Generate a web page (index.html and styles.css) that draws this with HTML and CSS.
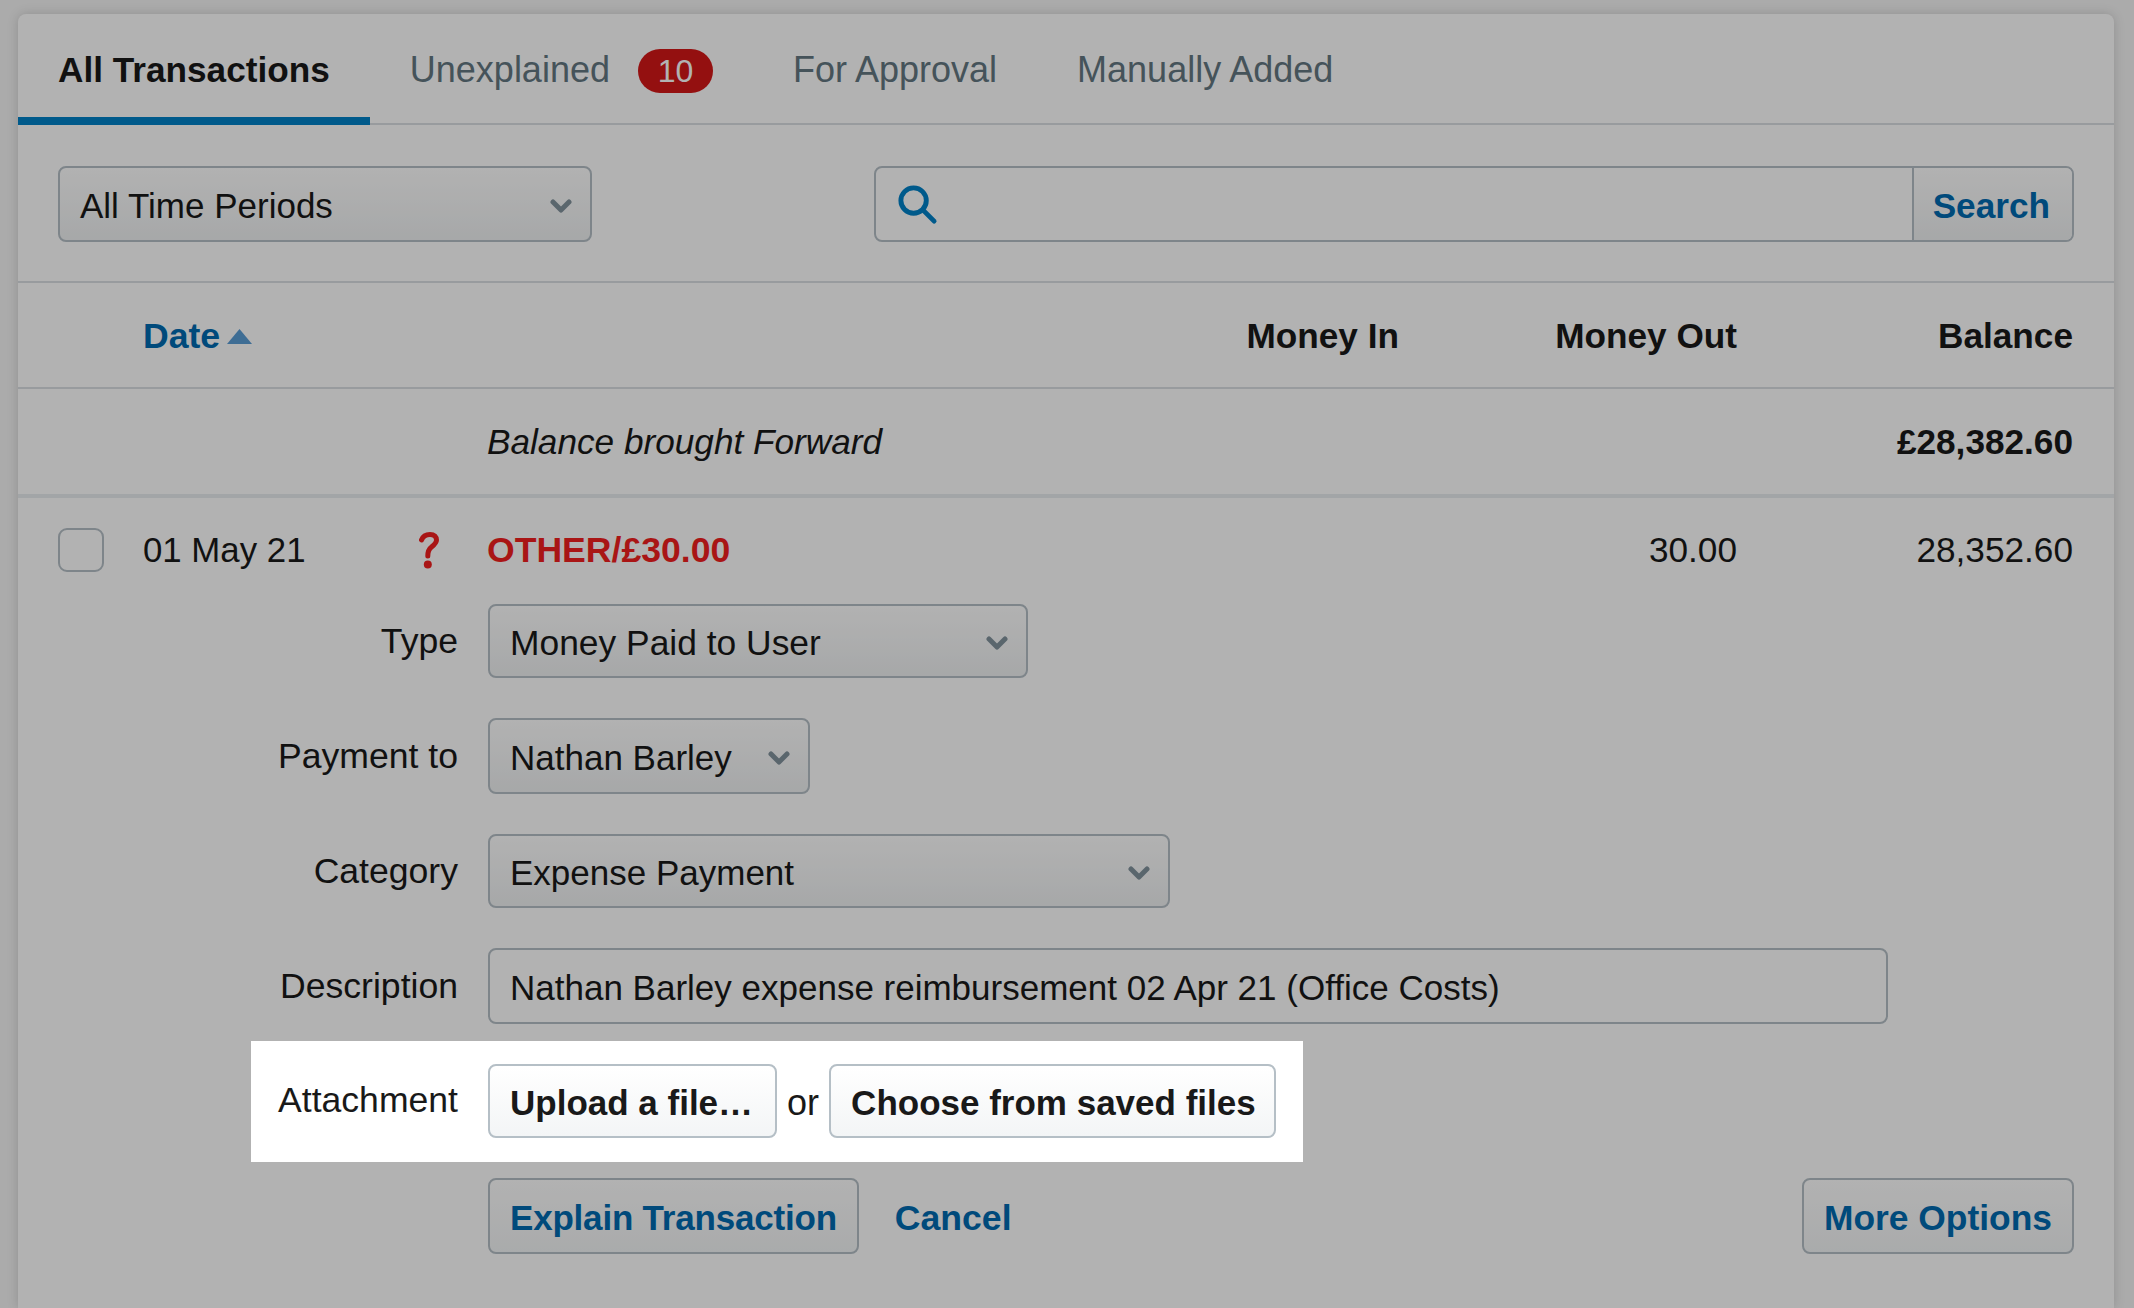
FILE: index.html
```html
<!DOCTYPE html>
<html lang="en">
<head>
<meta charset="utf-8">
<title>Bank transactions</title>
<link rel="stylesheet" href="styles.css">
</head>
<body>
<main class="card">
  <nav class="tabs">
    <a class="tab tab-active">All Transactions</a>
    <a class="tab">Unexplained<span class="badge">10</span></a>
    <a class="tab">For Approval</a>
    <a class="tab">Manually Added</a>
  </nav>

  <section class="filters">
    <div class="control select select-period">
      <span>All Time Periods</span>
      <svg class="chevron" viewBox="0 0 22 14"><path d="M3 3 11 11 19 3"/></svg>
    </div>
    <div class="search">
      <div class="search-field">
        <svg class="search-icon" viewBox="0 0 44 44"><circle cx="18" cy="18" r="13"/><path d="M28 28 39 39"/></svg>
      </div>
      <div class="search-button">Search</div>
    </div>
  </section>

  <section class="row row-head">
    <div class="col-date head-date">Date<svg class="sort" viewBox="0 0 25 15"><path d="M12.500 0 25 15H0z"/></svg></div>
    <div class="col-in">Money In</div>
    <div class="col-out">Money Out</div>
    <div class="col-bal">Balance</div>
  </section>

  <section class="row row-forward">
    <div class="col-desc forward-label">Balance brought Forward</div>
    <div class="col-bal forward-amount">£28,382.60</div>
  </section>

  <section class="transaction">
    <div class="row row-tx">
      <div class="col-check"><span class="checkbox"></span></div>
      <div class="col-date tx-date">01 May 21</div>
      <div class="col-flag">
        <svg class="flag" viewBox="0 0 20 37"><path class="flag-hook" d="M2.500 8C4 4 7 2.500 11 2.500 15.500 2.500 17.500 5 17.500 8 17.500 11 15 13 12.500 15 10.500 16.500 8.800 18 8.800 24"/><circle cx="8.800" cy="32.500" r="4"/></svg>
      </div>
      <div class="col-desc tx-title">OTHER/£30.00</div>
      <div class="col-out">30.00</div>
      <div class="col-bal">28,352.60</div>
    </div>

    <div class="form">
      <div class="form-row form-row-short">
        <div class="label">Type</div>
        <div class="control select select-type">
          <span>Money Paid to User</span>
          <svg class="chevron" viewBox="0 0 22 14"><path d="M3 3 11 11 19 3"/></svg>
        </div>
      </div>
      <div class="form-row">
        <div class="label">Payment to</div>
        <div class="control select select-payment">
          <span>Nathan Barley</span>
          <svg class="chevron" viewBox="0 0 22 14"><path d="M3 3 11 11 19 3"/></svg>
        </div>
      </div>
      <div class="form-row form-row-short">
        <div class="label">Category</div>
        <div class="control select select-category">
          <span>Expense Payment</span>
          <svg class="chevron" viewBox="0 0 22 14"><path d="M3 3 11 11 19 3"/></svg>
        </div>
      </div>
      <div class="form-row">
        <div class="label">Description</div>
        <div class="control text-input">Nathan Barley expense reimbursement 02 Apr 21 (Office Costs)</div>
      </div>
      <div class="form-row form-row-short form-row-attachment">
        <div class="spotlight"></div>
        <div class="label label-attachment">Attachment</div>
        <div class="control button button-dark button-upload">Upload a file…</div>
        <span class="or">or</span>
        <div class="control button button-dark button-saved">Choose from saved files</div>
      </div>
      <div class="form-row">
        <div class="label"></div>
        <div class="control button button-link button-explain">Explain Transaction</div>
        <a class="cancel">Cancel</a>
        <div class="control button button-link button-more">More Options</div>
      </div>
    </div>
  </section>
</main>
</body>
</html>
```
FILE: styles.css
```css
* { box-sizing: border-box; }

html {
  height: 100%;
  overflow: hidden;
}

body {
  margin: 0;
  height: 1308px;
  overflow: hidden;
  padding: 14px 20px 0 18px;
  background: #f5f5f5;
  color: #191919;
  font-family: "Liberation Sans", Arial, sans-serif;
  font-size: 35.2px;
  line-height: 44px;
}

.card {
  min-height: 1294px;
  background: #fff;
  border-radius: 8px 8px 0 0;
  box-shadow: 0 0 12px rgba(0, 0, 0, .16);
}

/* Tabs */
.tabs {
  display: flex;
  height: 111px;
  border-bottom: 2px solid #dadfe3;
}

.tab {
  display: flex;
  align-items: center;
  height: 111px;
  padding: 8px 40px 0;
  color: #647782;
  font-size: 36px;
  border-bottom: 8px solid transparent;
}

.tab-active {
  color: #191919;
  font-size: 35.2px;
  font-weight: 700;
  border-bottom-color: #0081c8;
}

.badge {
  width: 75px;
  height: 44px;
  margin: 2px 0 0 28px;
  border-radius: 22px;
  background: #d51717;
  color: #fff;
  text-align: center;
  font-size: 32px;
}

/* Filters */
.filters {
  display: flex;
  justify-content: space-between;
  height: 158px;
  padding: 41px 40px;
  border-bottom: 2px solid #dadfe3;
}

.control {
  display: flex;
  align-items: center;
  height: 100%;
  padding: 3px 20px 0;
  border: 2px solid #b5bfc6;
  border-radius: 8px;
  white-space: nowrap;
  font-size: 35px;
}

.select {
  justify-content: space-between;
  background: linear-gradient(#fff, #eff1f2);
  padding-right: 18px;
}

.chevron {
  flex: none;
  width: 22px;
  height: 14px;
  margin-top: 1px;
  fill: none;
  stroke: #82929c;
  stroke-width: 5;
  stroke-linecap: round;
  stroke-linejoin: round;
}

.select-period { width: 534px; height: 76px; }
.select-type { width: 540px; font-size: 35.4px; }
.select-payment { width: 322px; }
.select-category { width: 682px; }

.search {
  display: flex;
  width: 1200px;
  height: 76px;
  border: 2px solid #b5bfc6;
  border-radius: 8px;
}

.search-field {
  flex: 1;
  display: flex;
  align-items: center;
  padding-left: 20px;
}

.search-icon {
  width: 43px;
  height: 43px;
  fill: none;
  stroke: #0081c8;
  stroke-width: 5;
  stroke-linecap: round;
}

.search-button {
  display: flex;
  align-items: center;
  padding: 3px 22px 0 19px;
  border-left: 2px solid #b5bfc6;
  border-radius: 0 6px 6px 0;
  background: linear-gradient(#fff, #eff1f2);
  color: #006ab1;
  font-size: 35.2px;
  font-weight: 700;
}

/* Table rows */
.row {
  display: grid;
  grid-template-columns: 85px 273px 72px 711px 200px 338px 336px;
  align-items: center;
  padding: 0 40px;
}

.col-check { grid-column: 1; }
.col-date { grid-column: 2; }
.col-flag { grid-column: 3; display: flex; }
.col-desc { grid-column: 4; }
.col-in { grid-column: 5; text-align: right; }
.col-out { grid-column: 6; text-align: right; }
.col-bal { grid-column: 7; text-align: right; }

.row-head {
  height: 106px;
  padding-top: 2px;
  border-bottom: 2px solid #dadfe3;
  font-weight: 700;
}

.head-date {
  display: flex;
  align-items: center;
  color: #006ab1;
  font-size: 35.6px;
}

.sort {
  width: 25px;
  height: 15px;
  margin-left: 7px;
  fill: #5a9cd5;
}

.row-forward {
  height: 109px;
  border-bottom: 4px solid #e9edef;
}

.forward-label {
  margin-left: -1px;
  font-style: italic;
}

.forward-amount { font-weight: 700; }

/* Transaction */
.transaction { padding-top: 30px; }

.row-tx { height: 44px; }

.checkbox {
  display: block;
  width: 46px;
  height: 44px;
  border: 2px solid #b5bfc6;
  border-radius: 9px;
}

.tx-date { font-size: 34.8px; }

.flag {
  width: 20px;
  height: 37px;
  margin-left: 3px;
  fill: #f21f1f;
}

.flag-hook {
  fill: none;
  stroke: #f21f1f;
  stroke-width: 5;
  stroke-linecap: round;
}

.tx-title {
  margin-left: -1px;
  color: #f21f1f;
  font-size: 35.6px;
  font-weight: 700;
}

.form {
  display: flex;
  flex-direction: column;
  gap: 40px;
  margin-top: 32px;
  padding: 0 40px;
}

.form-row {
  position: relative;
  display: flex;
  align-items: center;
  height: 76px;
}

.form-row-short { height: 74px; }

.label {
  flex: none;
  width: 400px;
  margin-right: 30px;
  font-size: 35.6px;
  text-align: right;
}

.label-attachment { margin-top: -2px; }

.text-input { width: 1400px; }

.button { font-weight: 700; }

.button-dark {
  background: linear-gradient(#fff, #f3f5f6);
}

.button-upload { padding-right: 22px; }
.button-saved { padding-right: 18px; }

.button-link {
  background: linear-gradient(#fff, #f3f5f6);
  color: #006ab1;
}

.button-explain { letter-spacing: -.2px; }

.button-more {
  margin-left: auto;
  font-size: 35.4px;
}

.or {
  margin: 4px 10px 0;
  font-size: 36px;
}

.cancel {
  margin: 3px 0 0 36px;
  color: #006ab1;
  font-size: 35.6px;
  font-weight: 700;
}

/* Dim everything except the highlighted attachment row */
.spotlight {
  position: absolute;
  left: 193px;
  top: -23px;
  width: 1052px;
  height: 121px;
  z-index: 10;
  pointer-events: none;
  box-shadow: 0 0 0 3000px rgba(0, 0, 0, .3);
}
```
